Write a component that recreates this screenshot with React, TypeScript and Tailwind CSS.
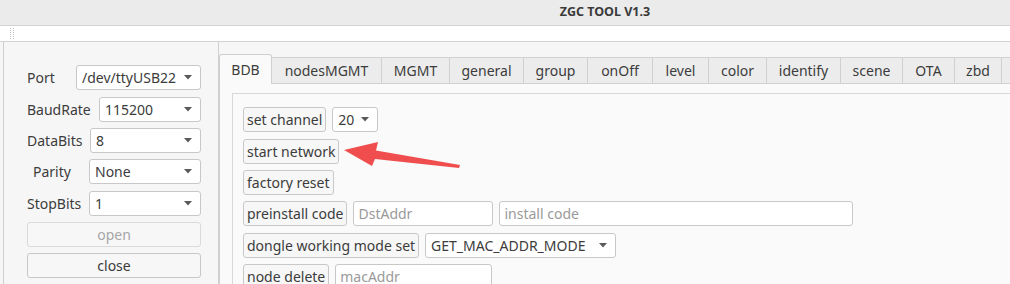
const tabs: { label: string; w: string }[] = [
  { label: "nodesMGMT", w: "w-[110px]" },
  { label: "MGMT", w: "w-[68px]" },
  { label: "general", w: "w-[74px]" },
  { label: "group", w: "w-[64px]" },
  { label: "onOff", w: "w-[65px]" },
  { label: "level", w: "w-[56px]" },
  { label: "color", w: "w-[58px]" },
  { label: "identify", w: "w-[74px]" },
  { label: "scene", w: "w-[62px]" },
  { label: "OTA", w: "w-[52px]" },
  { label: "zbd", w: "w-[47px]" },
  { label: "", w: "w-[40px]" },
];

function Caret() {
  return (
    <svg width="8" height="5" viewBox="0 0 8 5" className="shrink-0">
      <path d="M0 0 L8 0 L4 4.5 Z" fill="#5a5a5a" />
    </svg>
  );
}

function Combo({ value, className }: { value: string; className: string }) {
  return (
    <div className={`h-[25px] bg-white border border-[#c8c8c8] rounded-[3px] flex items-center justify-between pl-[5px] pr-[8px] ${className}`}>
      <span>{value}</span>
      <Caret />
    </div>
  );
}

function Btn({ children, className = "" }: { children: React.ReactNode; className?: string }) {
  return (
    <div className={`h-[25px] px-[3px] bg-[#f7f7f7] border border-[#c8c8c8] rounded-[3px] flex items-center ${className}`}>
      {children}
    </div>
  );
}

function Field({ placeholder, className }: { placeholder: string; className: string }) {
  return (
    <div className={`h-[25px] bg-white border border-[#c8c8c8] rounded-[3px] flex items-center px-[4px] text-[#9a9a9a] ${className}`}>
      {placeholder}
    </div>
  );
}

export default function App() {
  return (
    <div className="w-[1010px] h-[284px] overflow-hidden relative bg-[#f6f6f6] text-[14px] text-[#3c3c3c] font-['Noto_Sans',sans-serif] leading-none">
      {/* title bar */}
      <div className="h-[26px] bg-[#ebebeb] border-b border-[#d2d2d2] flex items-center justify-center pl-[200px]">
        <span className="font-bold text-[12.5px] text-[#3a3a3a]">ZGC TOOL V1.3</span>
      </div>
      {/* toolbar strip */}
      <div className="h-[16px] bg-white border-b border-[#d2d2d2] flex items-center pl-[10px]">
        <svg width="4" height="12" viewBox="0 0 4 12">
          {[0, 2, 4, 6, 8, 10].map((y) => (
            <g key={y}>
              <rect x="0" y={y} width="1" height="1" fill="#c4c4c4" />
              <rect x="3" y={y} width="1" height="1" fill="#c4c4c4" />
            </g>
          ))}
        </svg>
      </div>

      <div className="flex border-l border-[#cfcfcf] ml-[3px] h-full">
        {/* serial settings */}
        <div className="w-[215px] shrink-0 border-r border-[#d0d0d0] pt-[23px] pl-[23px] pr-[17px] flex flex-col">
          <div className="flex items-center h-[25px]">
            <span className="w-[49px]">Port</span>
            <Combo value="/dev/ttyUSB22" className="flex-1" />
          </div>
          <div className="flex items-center h-[25px] mt-[7px]">
            <span className="w-[72px]">BaudRate</span>
            <Combo value="115200" className="flex-1" />
          </div>
          <div className="flex items-center h-[25px] mt-[6px]">
            <span className="w-[63px]">DataBits</span>
            <Combo value="8" className="flex-1" />
          </div>
          <div className="flex items-center h-[25px] mt-[6px]">
            <span className="w-[62px] pl-[6px]">Parity</span>
            <Combo value="None" className="flex-1" />
          </div>
          <div className="flex items-center h-[25px] mt-[7px]">
            <span className="w-[62px]">StopBits</span>
            <Combo value="1" className="flex-1" />
          </div>
          <div className="h-[25px] mt-[6px] bg-[#f7f7f7] border border-[#dadada] rounded-[3px] flex items-center justify-center text-[#a6a6a6]">
            open
          </div>
          <div className="h-[25px] mt-[6px] bg-[#f7f7f7] border border-[#c8c8c8] rounded-[3px] flex items-center justify-center">
            close
          </div>
        </div>

        {/* tab widget */}
        <div className="flex-1 pt-[12px] flex flex-col">
          <div className="flex items-end h-[29px]">
            <div className="w-[53px] h-[30px] bg-[#fafafa] border border-b-0 border-[#cfcfcf] rounded-t-[3px] flex items-center justify-center -mb-px relative z-10">
              BDB
            </div>
            {tabs.map((t) => (
              <div
                key={t.w + t.label}
                className={`${t.w} shrink-0 h-[26px] bg-[#ececec] border-t border-r border-[#d0d0d0] flex items-center justify-center`}
              >
                {t.label}
              </div>
            ))}
          </div>
          <div className="flex-1 bg-[#fafafa] border-t border-l border-[#d0d0d0] pt-[9px] pl-[12px]">
            <div className="h-full border-t border-l border-[#d8d8d8] pt-[13px] pl-[10px] flex flex-col">
              <div className="flex gap-[6px] h-[25px]">
                <Btn>set channel</Btn>
                <Combo value="20" className="w-[46px] pr-[7px]" />
              </div>
              <div className="flex gap-[6px] h-[25px] mt-[7px]">
                <Btn>start network</Btn>
              </div>
              <div className="flex gap-[6px] h-[25px] mt-[6px]">
                <Btn>factory reset</Btn>
              </div>
              <div className="flex gap-[6px] h-[25px] mt-[6px]">
                <Btn>preinstall code</Btn>
                <Field placeholder="DstAddr" className="w-[140px]" />
                <Field placeholder="install code" className="w-[354px]" />
              </div>
              <div className="flex gap-[6px] h-[25px] mt-[7px]">
                <Btn>dongle working mode set</Btn>
                <Combo value="GET_MAC_ADDR_MODE" className="w-[191px] pr-[8px]" />
              </div>
              <div className="flex gap-[6px] h-[25px] mt-[6px]">
                <Btn>node delete</Btn>
                <Field placeholder="macAddr" className="w-[157px]" />
              </div>
            </div>
          </div>
        </div>
      </div>

      {/* annotation arrow */}
      <svg className="absolute left-0 top-0 pointer-events-none" width="1010" height="284" viewBox="0 0 1010 284">
        <polygon
          points="344,150 378,142 376,150.5 460,165 459,168 375,159 372,166"
          fill="#f04e4e"
        />
      </svg>
    </div>
  );
}
